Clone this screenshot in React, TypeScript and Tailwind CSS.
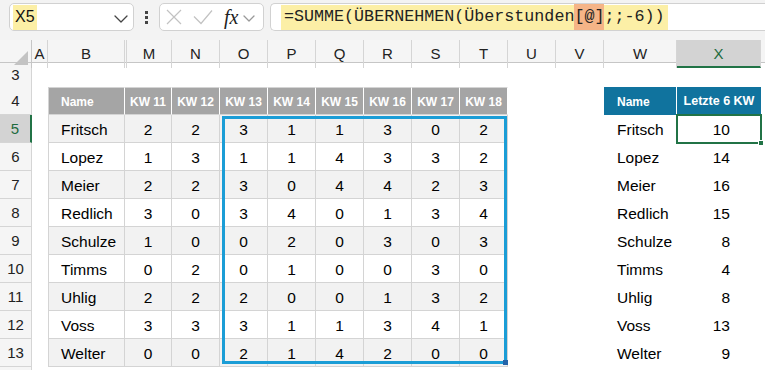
const rows: [string, number[], number][] = [
  ["Fritsch", [2, 2, 3, 1, 1, 3, 0, 2], 10],
  ["Lopez", [1, 3, 1, 1, 4, 3, 3, 2], 14],
  ["Meier", [2, 2, 3, 0, 4, 4, 2, 3], 16],
  ["Redlich", [3, 0, 3, 4, 0, 1, 3, 4], 15],
  ["Schulze", [1, 0, 0, 2, 0, 3, 0, 3], 8],
  ["Timms", [0, 2, 0, 1, 0, 0, 3, 0], 4],
  ["Uhlig", [2, 2, 2, 0, 0, 1, 3, 2], 8],
  ["Voss", [3, 3, 3, 1, 1, 3, 4, 1], 13],
  ["Welter", [0, 0, 2, 1, 4, 2, 0, 0], 9],
];

const weeks = ["KW 11", "KW 12", "KW 13", "KW 14", "KW 15", "KW 16", "KW 17", "KW 18"];
const letters = ["N", "O", "P", "Q", "R", "S", "T", "U", "V", "W"];

const grid = "grid grid-cols-[32px_16px_77px_47px_repeat(9,48px)_73px_84px_1fr]";
const rowHead = "flex items-center justify-center border-b border-r border-[#d5d5d5] bg-[#f5f5f5] pt-[1px] text-[15px] text-[#222]";
const colHead = "flex items-center justify-center border-r border-[#d5d5d5] pt-[1px] text-[15px] text-[#222]";

function Chevron({ w, h, color }: { w: number; h: number; color: string }) {
  return (
    <svg width={w + 2} height={h + 2} viewBox={`-1 -1 ${w + 2} ${h + 2}`} fill="none">
      <polyline points={`0,0 ${w / 2},${h} ${w},0`} stroke={color} strokeWidth="1.3" strokeLinecap="round" strokeLinejoin="round" />
    </svg>
  );
}

function FormulaBar() {
  return (
    <div className="flex h-[40px] items-start bg-[#f3f3f3] pt-[3px]">
      <div className="ml-[9px] flex h-[28px] w-[125px] items-center rounded-[5px] border border-[#d1d1d1] bg-white">
        <span className="ml-[3px] flex h-[25px] items-center bg-[#fcefa6] px-[2px] text-[16px] text-[#111]">X5</span>
        <span className="ml-auto mr-[5px] mt-[3px]">
          <Chevron w={12} h={6} color="#444" />
        </span>
      </div>
      <div className="ml-[11px] mt-[8px] flex flex-col gap-[2px]">
        <span className="h-[3px] w-[3px] bg-[#444]" />
        <span className="h-[3px] w-[3px] bg-[#444]" />
        <span className="h-[3px] w-[3px] bg-[#444]" />
      </div>
      <div className="ml-[11px] flex h-[28px] w-[105px] items-center rounded-[5px] border border-[#d1d1d1] bg-white">
        <svg className="ml-[6px]" width="16" height="16" viewBox="0 0 16 16" fill="none">
          <path d="M1 1 15 15M15 1 1 15" stroke="#c2c2c2" strokeWidth="1.2" />
        </svg>
        <svg className="ml-[11px]" width="20" height="16" viewBox="0 0 20 16" fill="none">
          <path d="M1 7.5 8 14.5 19 1.5" stroke="#c2c2c2" strokeWidth="1.2" />
        </svg>
        <span className="ml-[11px] font-['Liberation_Serif',serif] text-[20px] italic leading-none text-[#222]">fx</span>
        <span className="ml-[5px] mt-[2px]">
          <Chevron w={10} h={5} color="#999" />
        </span>
      </div>
      <div className="ml-[6px] flex h-[28px] flex-1 items-center rounded-l-[5px] border border-r-0 border-[#d1d1d1] bg-white">
        <span className="ml-[10px] flex h-[25px] items-center bg-[#fcefa6] px-[3px] font-['Liberation_Mono',monospace] text-[16.7px] text-[#222]">
          =SUMME(ÜBERNEHMEN(Überstunden<span className="bg-[#f5b487]">[@]</span>;;-6))
        </span>
      </div>
    </div>
  );
}

function HeaderRow() {
  return (
    <div className={`${grid} h-[23px] border-b border-[#c6c6c6] bg-[#f5f5f5]`}>
      <div className="relative border-r border-[#c6c6c6]">
        <div className="absolute bottom-[3px] right-[3px] h-0 w-0 border-b-[14px] border-l-[14px] border-b-[#c3c3c3] border-l-transparent" />
      </div>
      <div className={colHead}>A</div>
      <div className={colHead}>B</div>
      <div className="flex">
        <div className="ml-[1px] flex flex-1 items-center justify-center border-l border-r border-[#d5d5d5] pt-[1px] text-[15px] text-[#222]">M</div>
      </div>
      {letters.map((l) => (
        <div key={l} className={colHead}>{l}</div>
      ))}
      <div className="flex items-center justify-center border-b-2 border-r border-b-[#217346] border-r-[#d5d5d5] bg-[#d3d3d3] pt-[3px] text-[15px] text-[#1e6b3e]">X</div>
      <div />
    </div>
  );
}

function TableHeader() {
  return (
    <div className={`${grid} h-[28px] text-[12px] font-bold text-white`}>
      <div className={`${rowHead} font-normal`}>4</div>
      <div />
      <div className="flex items-center border-y border-l border-r border-[#d4d4d4] border-r-white bg-[#a5a5a5] pl-[12px] pt-[1px]">Name</div>
      {weeks.map((w) => (
        <div key={w} className="flex items-center justify-center border-y border-r border-[#d4d4d4] border-r-white bg-[#a5a5a5] pt-[1px] last:border-r-[#d4d4d4]">
          {w}
        </div>
      ))}
      <div />
      <div />
      <div className="flex items-center border-r border-white bg-[#10739e] pl-[13px] pt-[1px]">Name</div>
      <div className="flex items-center justify-center bg-[#10739e] pt-[1px] text-[12.5px]">Letzte 6 KW</div>
    </div>
  );
}

function DataRow({ n, name, vals, total }: { n: number; name: string; vals: number[]; total: number }) {
  const band = n % 2 === 1 ? "bg-[#f2f2f2]" : "bg-white";
  const sel = n === 5;
  return (
    <div className={`${grid} h-[28px] text-[15.5px] text-black`}>
      <div
        className={
          sel
            ? "flex items-center justify-center border-b border-r-2 border-b-[#d5d5d5] border-r-[#217346] bg-[#d3d3d3] pt-[1px] text-[15px] text-[#1e6b3e]"
            : rowHead
        }
      >
        {n}
      </div>
      <div />
      <div className={`flex items-center border-b border-l border-r border-[#d4d4d4] pl-[12px] pt-[2px] ${band}`}>{name}</div>
      {vals.map((v, i) => (
        <div key={i} className={`flex items-center justify-center border-b border-r border-[#d4d4d4] pt-[2px] ${band}`}>
          {v}
        </div>
      ))}
      <div />
      <div />
      <div className="flex items-center pl-[13px] pt-[2px]">{name}</div>
      <div className="flex items-center justify-end pr-[31px] pt-[2px]">{total}</div>
    </div>
  );
}

export default function App() {
  return (
    <div className="h-[370px] w-[765px] overflow-hidden bg-white font-['Liberation_Sans',Arial,sans-serif]">
      <FormulaBar />
      <div className="relative">
        <HeaderRow />
        <div className={`${grid} h-[24px]`}>
          <div className={rowHead}>3</div>
        </div>
        <TableHeader />
        {rows.map(([name, vals, total], i) => (
          <DataRow key={name} n={i + 5} name={name} vals={vals} total={total} />
        ))}
        <div className={`${grid} h-[28px]`}>
          <div className={rowHead} />
        </div>

        {/* referenced range */}
        <div className="pointer-events-none absolute left-[222px] top-[76px] h-[248px] w-[285px] border-[3px] border-[#1b9dd6]">
          <div className="absolute -bottom-[4px] -right-[4px] h-[5px] w-[5px] bg-[#2563a8]" />
        </div>
        {/* active cell */}
        <div className="pointer-events-none absolute left-[676px] top-[74px] h-[30px] w-[86px] border-2 border-[#217346]">
          <div className="absolute -bottom-[4px] -right-[4px] h-[6px] w-[6px] border border-white bg-[#217346]" />
        </div>
      </div>
    </div>
  );
}
